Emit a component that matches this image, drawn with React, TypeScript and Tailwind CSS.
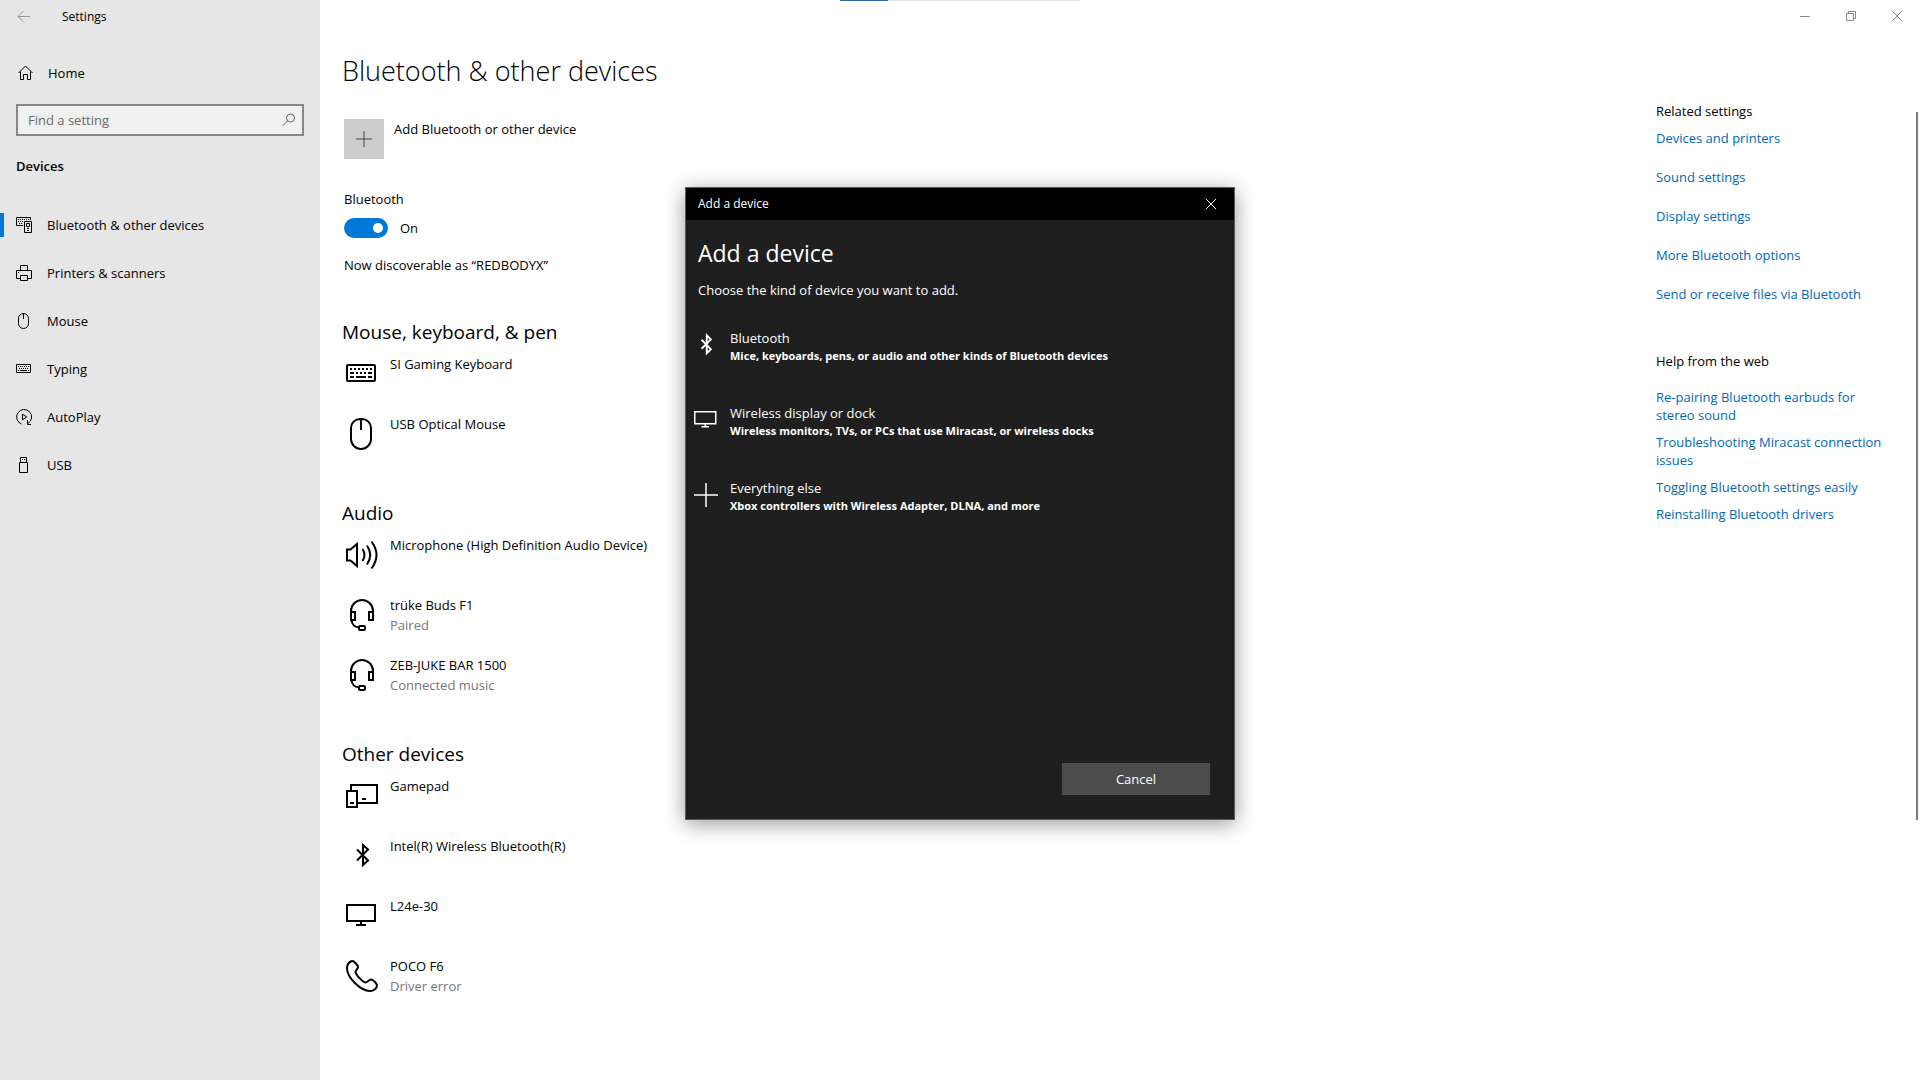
import React, { useState } from "react";

const icons = {
  devices: (
    <>
      <path d="M7 8.5H.5v-8h14V3" />
      <path d="M2 2.5h11M2 4.5h5M3 6.5h4" strokeDasharray="1 1" />
      <path d="M8.5 4.5h7v11h-7z" />
      <path d="M10.5 6.5h3v3h-3zM11 11.5h2M11 13.5h2" />
    </>
  ),
  printer: (
    <>
      <path d="M4.5 5V.5h7V5M4 13.5H.5v-8h15v8H12" />
      <path d="M4.5 10.5h7v5h-7zM2 7.5h1" />
    </>
  ),
  mouse: <path d="M7.5 0v6M7.5.5a5 5 0 0 1 5 5v5a5 5 0 0 1-10 0v-5a5 5 0 0 1 5-5z" />,
  keyboard: (
    <>
      <path d="M.5 3.5h14v8H.5z" />
      <path d="M2 5.5h11M3 7.5h10" strokeDasharray="1 1" />
      <path d="M2 9.5h1M4 9.5h7M12 9.5h1" />
    </>
  ),
  autoplay: (
    <>
      <path d="M5.5 15A7.5 7.5 0 1 1 12 14.4M11.5 11v4.5H15" />
      <path d="M6.5 5.2v5.6L10.7 8z" />
    </>
  ),
  usb: (
    <>
      <path d="M4.5 5V.5h6V5M3.5 5.5h8v10h-8z" />
      <path d="M6 2.5h1M8 2.5h1" />
    </>
  ),
};

const bigIcons = {
  keyboard: (
    <>
      <rect x="1" y="7" width="28" height="16" rx="1" />
      <path d="M4 11h2M8 11h2M12 11h2M16 11h2M20 11h2M24 11h2M4 15h4M10 15h2M14 15h2M18 15h2M22 15h4M4 19h4M10 19h10M22 19h4" />
    </>
  ),
  mouse: <path d="M15 0v12M14 1h2a9 9 0 0 1 9 9v11a10 10 0 0 1-20 0V10a9 9 0 0 1 9-9z" />,
  speaker: (
    <>
      <path d="M1 10.5v11h3.5L11 27V5l-6.5 5.5z" />
      <path d="M16.5 10q4 6 0 12M21 6.5q6.5 9.5 0 19M25.5 2.5q10 13.500 0 27" />
    </>
  ),
  headset: (
    <>
      <path d="M5 13v-1a11 11 0 0 1 22 0v1" />
      <path d="M5 13h4v8H5zM23 13h4v8h-4z" />
      <path d="M5.5 21c.5 4.5 2.5 7 7.5 7.5" />
      <rect x="13" y="27" width="6" height="4" rx="1" />
    </>
  ),
  gamepad: (
    <>
      <path d="M5 10V5h26v18H12" />
      <path d="M1 11h10v16H1zM4 23h4M16 19h4" />
    </>
  ),
  bluetooth: <path d="M11 9.500l11 11-5 4.500V5l5 4.500-11 11" />,
  bluetoothLarge: <path d="M10 9l12.500 12.500-5.500 5.500V3l5.500 5.500L10 21" strokeWidth="2.500" />,
  monitor: <path d="M1 5h28v16H1zM15 21v4M10 25h10" />,
  phone: (
    <path d="M6.5 1C8 1 11.5 5 12 6.5c.5 2-2.5 4-2.5 5.5 0 2.5 7.5 10.5 10 10.5 2 0 3.500-3 5.500-3s6 4 6 6c0 2.500-3 5.500-7 5.500C15 31 1 18 1 8c0-4 3-7 5.500-7z" />
  ),
  plus: <path d="M16 0v32M0 16h32" />,
};

const nav = [
  { icon: icons.devices, label: "Bluetooth & other devices" },
  { icon: icons.printer, label: "Printers & scanners" },
  { icon: icons.mouse, label: "Mouse" },
  { icon: icons.keyboard, label: "Typing" },
  { icon: icons.autoplay, label: "AutoPlay" },
  { icon: icons.usb, label: "USB" },
];

const groups = [
  {
    title: "Mouse, keyboard, & pen",
    items: [
      { icon: bigIcons.keyboard, name: "SI Gaming Keyboard" },
      { icon: bigIcons.mouse, name: "USB Optical Mouse" },
    ],
  },
  {
    title: "Audio",
    items: [
      { icon: bigIcons.speaker, name: "Microphone (High Definition Audio Device)" },
      { icon: bigIcons.headset, name: "trüke Buds F1", status: "Paired" },
      { icon: bigIcons.headset, name: "ZEB-JUKE BAR 1500", status: "Connected music" },
    ],
  },
  {
    title: "Other devices",
    items: [
      { icon: bigIcons.gamepad, name: "Gamepad" },
      { icon: bigIcons.bluetooth, name: "Intel(R) Wireless Bluetooth(R)" },
      { icon: bigIcons.monitor, name: "L24e-30" },
      { icon: bigIcons.phone, name: "POCO F6", status: "Driver error" },
    ],
  },
];

const relatedLinks = [
  "Devices and printers",
  "Sound settings",
  "Display settings",
  "More Bluetooth options",
  "Send or receive files via Bluetooth",
];

const helpLinks = [
  "Re-pairing Bluetooth earbuds for stereo sound",
  "Troubleshooting Miracast connection issues",
  "Toggling Bluetooth settings easily",
  "Reinstalling Bluetooth drivers",
];

const deviceKinds = [
  {
    icon: bigIcons.bluetoothLarge,
    name: "Bluetooth",
    text: "Mice, keyboards, pens, or audio and other kinds of Bluetooth devices",
  },
  {
    icon: bigIcons.monitor,
    name: "Wireless display or dock",
    text: "Wireless monitors, TVs, or PCs that use Miracast, or wireless docks",
  },
  {
    icon: bigIcons.plus,
    name: "Everything else",
    text: "Xbox controllers with Wireless Adapter, DLNA, and more",
  },
];

function SmallIcon({ children }: { children: React.ReactNode }) {
  return (
    <svg className="size-4 shrink-0" viewBox="0 0 16 16" fill="none" stroke="currentColor" aria-hidden="true">
      {children}
    </svg>
  );
}

function BigIcon({ children, className }: { children: React.ReactNode; className: string }) {
  return (
    <svg className={className} viewBox="0 0 32 32" fill="none" stroke="currentColor" strokeWidth="2" aria-hidden="true">
      {children}
    </svg>
  );
}

function Sidebar() {
  return (
    <aside className="w-80 shrink-0 bg-[#e6e6e6]">
      <div className="flex h-[33px] items-center">
        <button aria-label="Back" className="flex h-8 w-12 items-center justify-center text-[#999]">
          <SmallIcon>
            <path d="M2 7.5h12M7.5 2L2 7.5 7.5 13" />
          </SmallIcon>
        </button>
        <span className="pl-3.5 text-xs">Settings</span>
      </div>

      <a href="#home" className="mt-4 flex h-12 items-center gap-3.5 pl-[18px]">
        <SmallIcon>
          <path d="M.5 8L7.5 1l7 7M2.5 6.5v8h3v-5h4v5h3v-8" />
        </SmallIcon>
        Home
      </a>

      <div className="mx-4 mt-[7px] flex h-8 items-center border-2 border-[#888] bg-[#f0f0f0]">
        <input
          aria-label="Find a setting"
          placeholder="Find a setting"
          className="min-w-0 flex-1 bg-transparent pl-2.5 outline-none placeholder:text-[#6a6a6a]"
        />
        <button aria-label="Search" className="px-[5px] text-[#666]">
          <SmallIcon>
            <circle cx="9.5" cy="6" r="4" />
            <path d="M6.5 9L1.5 14" />
          </SmallIcon>
        </button>
      </div>

      <h2 className="mt-5 mb-[25px] pl-4 font-semibold">Devices</h2>

      <nav>
        {nav.map((item, i) => (
          <a
            key={item.label}
            href="#section"
            aria-current={i === 0 ? "page" : undefined}
            className="flex h-12 items-center"
          >
            <span className={`h-6 w-1 ${i === 0 ? "bg-[#0078d7]" : ""}`} />
            <span className="pr-[15px] pl-3">
              <SmallIcon>{item.icon}</SmallIcon>
            </span>
            {item.label}
          </a>
        ))}
      </nav>
    </aside>
  );
}

function WindowControls() {
  return (
    <div className="flex justify-end text-[#888]">
      <button aria-label="Minimize" className="flex h-8 w-[46px] items-center justify-center">
        <SmallIcon><path d="M3 8.5h10" /></SmallIcon>
      </button>
      <button aria-label="Restore" className="flex h-8 w-[46px] items-center justify-center">
        <SmallIcon><path d="M3.5 5.5h7v7h-7zM5.5 5V3.5h7v7H11" /></SmallIcon>
      </button>
      <button aria-label="Close" className="flex h-8 w-[46px] items-center justify-center">
        <SmallIcon><path d="M3 3l10 10M13 3L3 13" /></SmallIcon>
      </button>
    </div>
  );
}

function DeviceList() {
  const [on, setOn] = useState(true);

  return (
    <main className="min-w-0 flex-1 pl-[22px]">
      <h1 className="mt-5 text-[27px] leading-[38px] font-light">Bluetooth &amp; other devices</h1>

      <button className="mt-[29px] flex gap-2.5 pl-0.5 text-left">
        <span className="flex size-10 items-center justify-center bg-[#ccc] text-[#444]">
          <BigIcon className="size-4">{bigIcons.plus}</BigIcon>
        </span>
        Add Bluetooth or other device
      </button>

      <div className="pl-0.5">
        <p className="mt-[30px]">Bluetooth</p>
        <label className="mt-[9px] flex h-5 items-center gap-3">
          <span className="relative flex">
            <input
              type="checkbox"
              role="switch"
              aria-label="Bluetooth"
              checked={on}
              onChange={() => setOn(!on)}
              className="h-5 w-11 appearance-none rounded-full bg-[#999] checked:bg-[#0078d7]"
            />
            <span className={`pointer-events-none absolute top-[5px] size-2.5 rounded-full bg-white ${on ? "right-[5px]" : "left-[5px]"}`} />
          </span>
          {on ? "On" : "Off"}
        </label>
        <p className="mt-[17px] mb-[43px]">Now discoverable as “REDBODYX”</p>
      </div>

      <div className="flex flex-col gap-[25px]">
        {groups.map((group) => (
          <section key={group.title}>
            <h2 className="mb-2 text-[19px] leading-7">{group.title}</h2>
            <ul>
              {group.items.map((item) => (
                <li key={item.name} className="flex h-[60px] gap-3 pl-1">
                  <BigIcon className="mt-1 size-8 shrink-0">{item.icon}</BigIcon>
                  <div>
                    <p>{item.name}</p>
                    {item.status && <p className="text-[#767676]">{item.status}</p>}
                  </div>
                </li>
              ))}
            </ul>
          </section>
        ))}
      </div>
    </main>
  );
}

function RelatedPanel() {
  return (
    <aside className="w-[264px] shrink-0 pt-[69px] pr-6">
      <h2 className="mb-[7px]">Related settings</h2>
      <ul className="flex flex-col gap-[19px] text-[#0067b8]">
        {relatedLinks.map((link) => (
          <li key={link}>
            <a href="#related">{link}</a>
          </li>
        ))}
      </ul>

      <h2 className="mt-[47px] mb-[17px]">Help from the web</h2>
      <ul className="flex flex-col gap-[9px] leading-[18px] text-[#0067b8]">
        {helpLinks.map((link) => (
          <li key={link}>
            <a href="#help">{link}</a>
          </li>
        ))}
      </ul>
    </aside>
  );
}

function AddDeviceDialog() {
  return (
    <div
      role="dialog"
      aria-label="Add a device"
      className="absolute inset-x-0 top-[187px] mx-auto flex min-h-[633px] w-[550px] flex-col border border-[#5a5a5a] bg-[#1f1f1f] text-white shadow-[0_4px_20px_rgba(0,0,0,0.4)]"
    >
      <div className="flex h-8 items-center justify-between bg-black pl-3">
        <span className="text-xs">Add a device</span>
        <button aria-label="Close dialog" className="flex h-8 w-[46px] items-center justify-center">
          <SmallIcon><path d="M3 3l10 10M13 3L3 13" /></SmallIcon>
        </button>
      </div>

      <h1 className="mt-[17px] pl-3 text-[23px] leading-8">Add a device</h1>
      <p className="mt-[11px] pl-3">Choose the kind of device you want to add.</p>

      <ul className="mt-7">
        {deviceKinds.map((kind) => (
          <li key={kind.name} className="h-[75px]">
            <button className="flex items-start gap-3 pl-2 text-left">
              <BigIcon className="mt-[5px] size-6 shrink-0">{kind.icon}</BigIcon>
              <span className="flex flex-col">
                <span>{kind.name}</span>
                <span className="text-[11px] leading-4 font-bold">{kind.text}</span>
              </span>
            </button>
          </li>
        ))}
      </ul>

      <div className="mt-auto flex justify-end pr-6 pb-6">
        <button className="h-8 w-[148px] bg-[#4c4c4c]">Cancel</button>
      </div>
    </div>
  );
}

export default function App() {
  return (
    <div className="relative flex min-h-screen bg-white font-['Open_Sans',sans-serif] text-[13px] leading-5 text-black">
      <Sidebar />
      <div className="flex min-w-0 flex-1 flex-col">
        <WindowControls />
        <div className="flex flex-1">
          <DeviceList />
          <RelatedPanel />
        </div>
      </div>

      {/* loading strip */}
      <div className="absolute inset-x-0 top-0 mx-auto h-px w-60 bg-[#e3e3e3]">
        <div className="h-px w-12 bg-[#2f6ea8]" />
      </div>

      {/* scrollbar thumb */}
      <div className="absolute top-28 right-0.5 h-[708px] w-0.5 bg-[#7a7a7a]" />

      <AddDeviceDialog />
    </div>
  );
}
